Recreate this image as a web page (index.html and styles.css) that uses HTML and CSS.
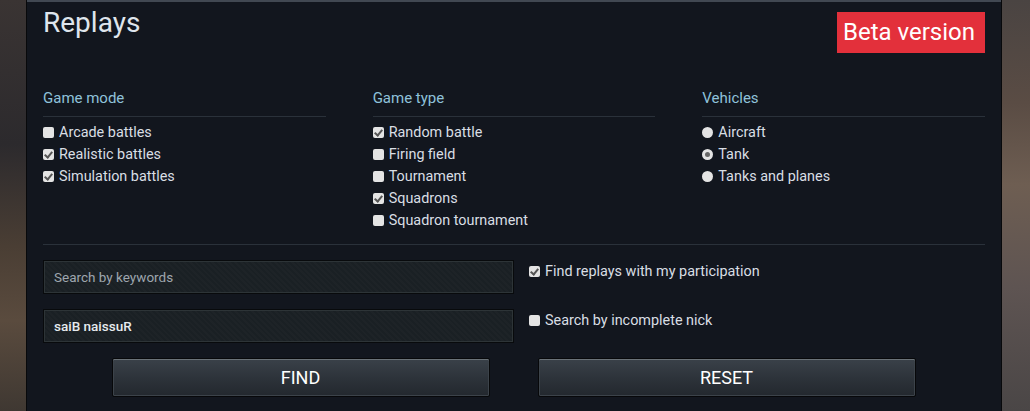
FILE: index.html
```html
<!DOCTYPE html>
<html>
<head>
<meta charset="utf-8">
<link rel="stylesheet" href="styles.css">
</head>
<body>
<div class="bg-left"></div>
<main class="panel">
  <header class="head">
    <h1 class="title">Replays</h1>
    <div class="beta">Beta version</div>
  </header>

  <section class="filters">
    <div class="col">
      <h2 class="col-title">Game mode</h2>
      <ul class="opts">
        <li><span class="cb"></span>Arcade battles</li>
        <li><span class="cb on"></span>Realistic battles</li>
        <li><span class="cb on"></span>Simulation battles</li>
      </ul>
    </div>
    <div class="col">
      <h2 class="col-title">Game type</h2>
      <ul class="opts">
        <li><span class="cb on"></span>Random battle</li>
        <li><span class="cb"></span>Firing field</li>
        <li><span class="cb"></span>Tournament</li>
        <li><span class="cb on"></span>Squadrons</li>
        <li><span class="cb"></span>Squadron tournament</li>
      </ul>
    </div>
    <div class="col">
      <h2 class="col-title">Vehicles</h2>
      <ul class="opts">
        <li><span class="rb"></span>Aircraft</li>
        <li><span class="rb on"></span>Tank</li>
        <li><span class="rb"></span>Tanks and planes</li>
      </ul>
    </div>
  </section>

  <div class="sep"></div>

  <section class="search">
    <div class="row">
      <div class="field placeholder">Search by keywords</div>
      <label class="opt"><span class="cb on"></span>Find replays with my participation</label>
    </div>
    <div class="row">
      <div class="field value">saiB naissuR</div>
      <label class="opt"><span class="cb"></span>Search by incomplete nick</label>
    </div>
  </section>

  <div class="buttons">
    <button class="btn">FIND</button>
    <button class="btn">RESET</button>
  </div>
</main>
<div class="bg-right"></div>
</body>
</html>
```

FILE: styles.css
```css
* { box-sizing: border-box; }
html, body { margin: 0; padding: 0; }
body {
  width: 1030px;
  height: 411px;
  overflow: hidden;
  display: flex;
  font-family: Roboto, "Liberation Sans", sans-serif;
  background: #2a2624;
}
.bg-left {
  width: 27px;
  flex: none;
  background: linear-gradient(180deg, #3a3433 0%, #2c2a2d 35%, #4a3e34 60%, #5a4b3e 78%, #3f3832 100%);
  border-right: 1px solid #08090b;
}
.bg-right {
  flex: 1;
  background: linear-gradient(180deg, #4a4442 0%, #5a4c44 25%, #6e5e52 45%, #5e5452 70%, #4a4646 100%);
  border-left: 1px solid #08090b;
}
.panel {
  width: 974px;
  flex: none;
  background: #12161e;
  border-top: 2px solid #414852;
  padding: 0 16px 0 16px;
  color: #d9dee4;
}
.head {
  display: flex;
  justify-content: space-between;
  align-items: flex-start;
  height: 86px;
}
.title {
  margin: 5px 0 0 0;
  font-size: 28px;
  font-weight: 400;
  line-height: 32px;
  color: #dfe5ec;
}
.beta {
  margin-top: 10px;
  width: 148px;
  height: 41px;
  background: #e3303b;
  color: #ffffff;
  font-size: 24px;
  line-height: 41px;
  padding-left: 6px;
  white-space: nowrap;
}
.filters {
  display: grid;
  grid-template-columns: repeat(3, 1fr);
  column-gap: 47px;
  height: 156px;
}
.col-title {
  margin: 0;
  font-size: 15px;
  font-weight: 400;
  line-height: 20px;
  color: #8fc2da;
  padding-bottom: 8px;
  border-bottom: 1px solid #2a313a;
}
.opts {
  list-style: none;
  margin: 4px 0 0 0;
  padding: 0;
}
.opts li, .opt {
  display: flex;
  align-items: center;
  height: 22px;
  font-size: 14.4px;
  color: #d9dee4;
  white-space: nowrap;
}
.cb, .rb {
  width: 11px;
  height: 11px;
  flex: none;
  margin-right: 5px;
  background: #e4e4e4;
  position: relative;
}
.cb { border-radius: 2px; }
.rb { border-radius: 50%; margin-right: 5px; }
.cb.on::after {
  content: "";
  position: absolute;
  left: 3px;
  top: 1px;
  width: 3px;
  height: 6px;
  border-right: 2px solid #555;
  border-bottom: 2px solid #555;
  transform: rotate(40deg);
}
.rb.on::after {
  content: "";
  position: absolute;
  left: 3px;
  top: 3px;
  width: 5px;
  height: 5px;
  border-radius: 50%;
  background: #666;
}
.sep {
  height: 1px;
  background: #2a313a;
}
.search {
  padding-top: 15px;
  display: flex;
  flex-direction: column;
  gap: 15px;
}
.row {
  display: flex;
  align-items: flex-start;
}
.field {
  width: 471px;
  height: 34px;
  flex: none;
  background-color: #1a2024;
  background-image: repeating-linear-gradient(45deg, rgba(255,255,255,0.015) 0 2px, transparent 2px 4px);
  border: 1px solid #080a0c;
  box-shadow: inset 0 0 0 1px #2d3437;
  font-size: 13.5px;
  line-height: 32px;
  padding-left: 10px;
}
.placeholder { color: #9ea6ae; }
.value { color: #e6eaee; font-weight: 500; }
.opt {
  margin-left: 15px;
  margin-top: 0;
}
.buttons {
  display: flex;
  justify-content: center;
  gap: 48px;
  padding-top: 15px;
  padding-right: 1px;
}
.btn {
  width: 378px;
  height: 39px;
  font-family: Roboto, "Liberation Sans", sans-serif;
  font-size: 18px;
  color: #ffffff;
  background: linear-gradient(180deg, #3a4149 0%, #2c3239 55%, #23282e 100%);
  border: 1px solid #07080a;
  box-shadow: inset 0 1px 0 #6a7278, inset 0 0 0 1px #3c434a;
  border-radius: 2px;
  padding: 0;
}
```
